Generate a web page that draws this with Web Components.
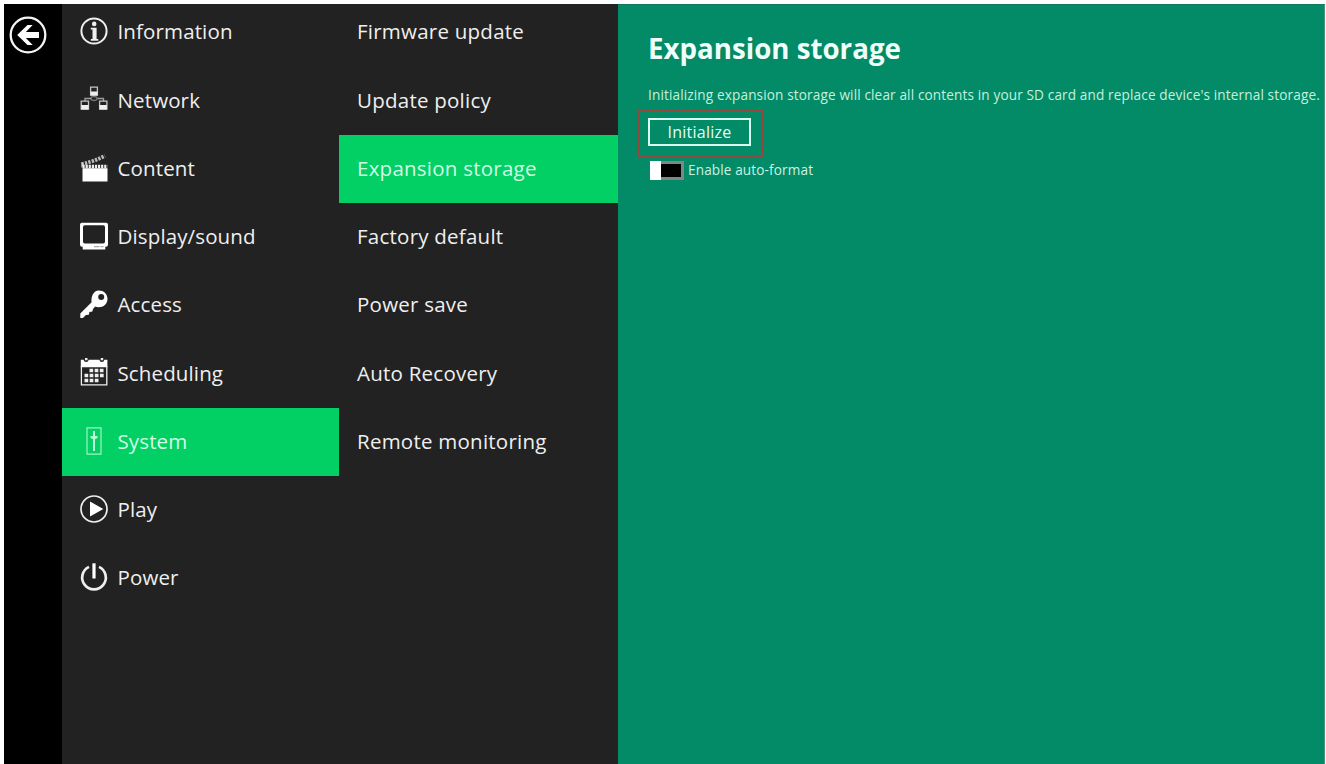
<!DOCTYPE html>
<html lang="en">
<head>
<meta charset="utf-8">
<title>Settings - Expansion storage</title>
<style>
html,body{margin:0;height:100%;background:#fff;overflow:hidden}
body{font-family:"Open Sans","Noto Sans",sans-serif;color:#f2f2f2}
</style>
</head>
<body>
<settings-app></settings-app>
<script>
const icons = {
  back: '<svg width="38" height="38" viewBox="0 0 38 38"><circle cx="19" cy="19" r="17.3" fill="none" stroke="#f4f4f4" stroke-width="2.3"/><path d="M8.2 19 18.500 9h5.200l-6.800 7H30v6H16.900l6.800 7h-5.200z" fill="#fff"/></svg>',
  info: '<svg width="28" height="28" viewBox="0 0 28 28"><circle cx="14" cy="14" r="12.6" fill="none" stroke="currentColor" stroke-width="2"/><circle cx="14.2" cy="6.900" r="2.300" fill="currentColor"/><path d="M10.800 10.700h5.800v11.400h1.700v1.700h-7.500v-1.700h1.700v-9.700h-1.700z" fill="currentColor"/></svg>',
  network: '<svg width="28" height="28" viewBox="0 0 28 28"><g fill="none" stroke="currentColor" stroke-width="1.3"><path d="M10.6 2.2h6.8v8h-6.8zM1.2 16.2h7.3v8H1.2zM19.6 16.2h7.3v8h-7.3z" opacity=".8"/><path d="M5 16v-2.500h6M23.500 16v-2.500h-6" opacity=".6"/><path d="M11 13.500q0-2 3-2t3 2q0 2-3 2t-3-2z" opacity=".4"/></g><path d="M10.600 6.500h6.800v4h-6.800zM1.200 20h7.300v4.500H1.200zM19.600 20h7.300v4.500h-7.300z" fill="currentColor"/></svg>',
  content: '<svg width="28" height="28" viewBox="0 0 28 28"><path d="M2.500 14.200h25v13.300h-25z" fill="#fff"/><path d="M2.500 12.300h25" stroke="currentColor" stroke-width="3.200" stroke-dasharray="2.200 .9"/><path d="M1.700 10.200C9 8.500 17 5.800 25 1.900" fill="none" stroke="currentColor" stroke-width="3.800" stroke-dasharray="2.300 1.200" opacity=".75"/><path d="M2 8.500v5" stroke="currentColor"/></svg>',
  display: '<svg width="28" height="28" viewBox="0 0 28 28"><path fill-rule="evenodd" d="M2 .8h24q2 0 2 2v20q0 2-2 2h-.7v2.700H2.700v-2.700H2q-2 0-2-2v-20q0-2 2-2zM4.700 3.200Q3 3.200 3 5v14.500q0 1.900 1.700 1.900h18.600q1.700 0 1.700-1.900V5q0-1.800-1.700-1.800z" fill="#fff"/><path d="M14 24.700h5.500M20.500 24.700h3" stroke="#777" stroke-width=".8"/></svg>',
  key: '<svg width="28" height="28" viewBox="0 0 28 28"><path fill-rule="evenodd" d="M18.700.6c5 0 8.800 3.500 8.800 8.200 0 5-4 8.500-8.800 8.500-1.500 0-2.600-.2-3.500-.7L13 19l-.6 2.600-3 .4-.5 2.700-3 .3-3 3H.3v-4.600L11.600 12.200c-.8-5.600 2-11.600 7.100-11.600zM21.200 4a3 3 0 1 0 0 6 3 3 0 0 0 0-6z" fill="#fff"/></svg>',
  calendar: '<svg width="28" height="28" viewBox="0 0 28 28"><path d="M.8 1.800h2.800Q4 4 6.200 4t2.500-2.200h10.600Q19.800 4 21.900 4t2.500-2.200h3v7.400H.8z" fill="#fff"/><path d="M5 0h2.500v2.300H5zM20.700 0h2.500v2.300h-2.500z" fill="currentColor"/><path d="M1.400 8v18.800h25.400V8" fill="none" stroke="currentColor" stroke-width="1.300"/><path d="M9.500 12.500h14.500M4.500 17.500h19.500M4.500 22.500h14.500" stroke="currentColor" stroke-width="3.300" stroke-dasharray="3.700 1.450"/></svg>',
  system: '<svg width="28" height="28" viewBox="0 0 28 28"><path d="M7 .8h14v26.400H7z" fill="none" stroke="#9df5c5" stroke-width="1.200"/><path d="M14 4v20" stroke="#b9f9d7" stroke-width="2"/><path d="M10.500 9h7v2l-2 1h-3l-2-1z" fill="#b9f9d7"/></svg>',
  play: '<svg width="28" height="28" viewBox="0 0 28 28"><circle cx="14" cy="14" r="13" fill="none" stroke="currentColor" stroke-width="1.700"/><path d="M10 6.500 23.300 14 10 21.500z" fill="#fff"/></svg>',
  power: '<svg width="28" height="28" viewBox="0 0 28 28"><path d="M9 3.900a11.800 11.800 0 1 0 10 0" fill="none" stroke="currentColor" stroke-width="2.700"/><path d="M14 .3v15.200" stroke="#fff" stroke-width="3.200"/></svg>'
};

class BaseElement extends HTMLElement {
  connectedCallback() {
    if (!this.shadowRoot) this.attachShadow({mode: 'open'}).innerHTML = this.render();
  }
}

customElements.define('app-icon', class extends BaseElement {
  render() {
    return `<style>:host{display:block;flex:none}svg{display:block;overflow:visible}</style>${icons[this.getAttribute('name')]}`;
  }
});

customElements.define('menu-item', class extends BaseElement {
  render() {
    const icon = this.getAttribute('icon');
    return `<style>
      :host{display:flex;align-items:center;height:68.260px;box-sizing:border-box;padding:0 0 0 18px;font-size:20.500px;line-height:28px;white-space:nowrap;color:#efefef}
      :host([active]){background:#02d064;color:#d2fbe4}
      app-icon{margin:0 9.500px 3px 0}
      span{padding-bottom:2.600px;letter-spacing:var(--track,.13px)}
    </style>${icon ? `<app-icon name="${icon}"></app-icon>` : ''}<span><slot></slot></span>`;
  }
});

customElements.define('menu-column', class extends BaseElement {
  render() {
    return `<style>:host{display:block;overflow:hidden;background:#222;min-width:0}nav{margin-top:-5.400px}</style><nav><slot></slot></nav>`;
  }
});

customElements.define('outline-button', class extends BaseElement {
  render() {
    return `<style>
      :host{display:block;width:max-content;border:2px solid #93483f;padding:7px 10px 9px 9px;margin-left:-11px}
      button{display:block;box-sizing:border-box;width:103px;height:28px;border:2px solid #d9fff0;background:none;color:#e4fff5;font:16px/22px "Open Sans","Noto Sans",sans-serif;letter-spacing:.25px;padding:0 0 1px;text-align:center}
    </style><button><slot></slot></button>`;
  }
});

customElements.define('toggle-switch', class extends BaseElement {
  render() {
    return `<style>
      :host{display:flex;align-items:center;gap:4px;font-size:13.600px;letter-spacing:.12px;line-height:18px;color:#c9f3e2}
      i{display:flex;box-sizing:border-box;width:34px;height:19px;background:#7b8883}
      i::before{content:"";width:11px;background:#fff}
      i::after{content:"";flex:1;margin:3px 3px 3px 0;background:#000}
      span{padding-bottom:1px}
    </style><i></i><span><slot></slot></span>`;
  }
});

customElements.define('detail-panel', class extends BaseElement {
  render() {
    return `<style>
      :host{display:block;background:#038a66;box-sizing:border-box;padding:25px 0 0 30px;white-space:nowrap;min-width:0;overflow:hidden;border-top:1px solid #16775d;border-right:1px solid #4c9680}
      h1{margin:0;font-size:27.700px;line-height:36px;font-weight:700;color:#f0fff9}
      p{margin:20px 0 0;font-size:13.600px;letter-spacing:.13px;line-height:18px;color:#c4f1df}
      outline-button{margin-top:5px}
      toggle-switch{margin:4px 0 0 2px}
    </style>
    <h1>Expansion storage</h1>
    <p>Initializing expansion storage will clear all contents in your SD card and replace device's internal storage.</p>
    <outline-button>Initialize</outline-button>
    <toggle-switch>Enable auto-format</toggle-switch>`;
  }
});

customElements.define('settings-app', class extends BaseElement {
  render() {
    return `<style>
      :host{display:grid;grid-template-columns:58px 277px 279px 707px;height:100vh;box-sizing:border-box;padding:4px 1px 0 4px;background:#fff}
      aside{background:#000;padding:12px 0 0 5px}
      .sub{--track:.24px}
    </style>
    <aside><app-icon name="back"></app-icon></aside>
    <menu-column>
      <menu-item icon="info">Information</menu-item>
      <menu-item icon="network">Network</menu-item>
      <menu-item icon="content">Content</menu-item>
      <menu-item icon="display">Display/sound</menu-item>
      <menu-item icon="key">Access</menu-item>
      <menu-item icon="calendar">Scheduling</menu-item>
      <menu-item icon="system" active>System</menu-item>
      <menu-item icon="play">Play</menu-item>
      <menu-item icon="power">Power</menu-item>
    </menu-column>
    <menu-column class="sub">
      <menu-item>Firmware update</menu-item>
      <menu-item>Update policy</menu-item>
      <menu-item active>Expansion storage</menu-item>
      <menu-item>Factory default</menu-item>
      <menu-item>Power save</menu-item>
      <menu-item>Auto Recovery</menu-item>
      <menu-item>Remote monitoring</menu-item>
    </menu-column>
    <detail-panel></detail-panel>`;
  }
});
</script>
</body>
</html>
